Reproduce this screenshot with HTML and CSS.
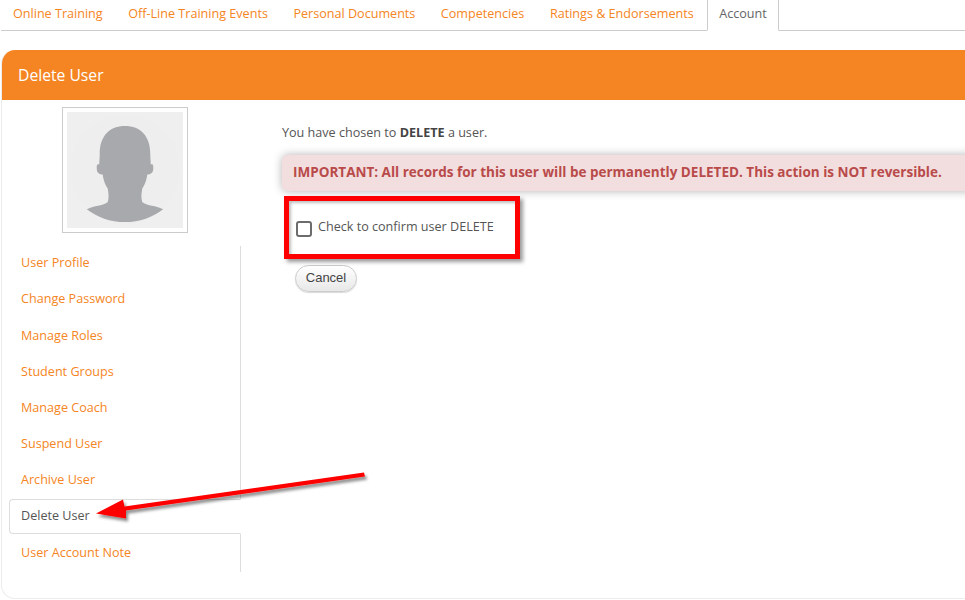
FILE: index.html
```html
<!DOCTYPE html>
<html lang="en">
<head>
<meta charset="utf-8">
<title>Delete User</title>
<link rel="stylesheet" href="styles.css">
</head>
<body>
<nav class="tabs">
  <a class="tab">Online Training</a>
  <a class="tab">Off-Line Training Events</a>
  <a class="tab">Personal Documents</a>
  <a class="tab">Competencies</a>
  <a class="tab">Ratings &amp; Endorsements</a>
  <a class="tab tab-active">Account</a>
</nav>
<section class="panel">
  <header class="panel-head">Delete User</header>
  <div class="panel-body">
    <aside class="side">
      <div class="avatar">
        <svg class="avatar-img" viewBox="0 0 117 117" aria-hidden="true">
          <rect width="117" height="117" fill="#f0efef"/>
          <circle cx="58.5" cy="58" r="55" fill="#eeeeee"/>
          <path fill="#a7a9ac" d="M58.500 14C43 14 33 24 33 42C33 46 32.500 50 32.500 53C30 52 30 54 30 57C30 62 33 63 36 63C37 70 39 74 41 77C42 83 42.500 87 41 91C35 95 28 94 20 98C30 106 44 111 58.500 111C73 111 87 106 97 98C89 94 82 95 76 91C74.500 87 75 83 76 77C78 74 80 70 81 63C84 63 87 62 87 57C87 54 87 52 84.500 53C84.500 50 84 46 84 42C84 24 74 14 58.500 14Z"/>
        </svg>
      </div>
      <ul class="menu">
        <li class="menu-item">User Profile</li>
        <li class="menu-item">Change Password</li>
        <li class="menu-item">Manage Roles</li>
        <li class="menu-item">Student Groups</li>
        <li class="menu-item">Manage Coach</li>
        <li class="menu-item">Suspend User</li>
        <li class="menu-item">Archive User</li>
        <li class="menu-item menu-active">Delete User</li>
        <li class="menu-item">User Account Note</li>
      </ul>
    </aside>
    <main class="content">
      <p class="lead">You have chosen to <b>DELETE</b> a user.</p>
      <div class="alert">IMPORTANT: All records for this user will be permanently DELETED. This action is NOT reversible.</div>
      <label class="confirm"><input class="check" type="checkbox"><span class="confirm-text">Check to confirm user DELETE</span></label>
      <button class="cancel" type="button">Cancel</button>
    </main>
  </div>
</section>
<div class="callout"></div>
<svg class="arrow" width="965" height="600" viewBox="0 0 965 600" aria-hidden="true">
  <defs><filter id="sh" x="-10%" y="-30%" width="120%" height="170%"><feDropShadow dx="2" dy="3" stdDeviation="1.500" flood-color="#000" flood-opacity=".45"/></filter></defs>
  <path filter="url(#sh)" fill="#f00" d="M364 472.500L365 476.500L126 510.500L126 518.500L96 513.500L123 499.500L124.500 506.500Z"/>
</svg>
</body>
</html>
```
FILE: styles.css
```css
* { box-sizing: border-box; }
html, body { margin: 0; padding: 0; }
body {
  width: 965px;
  height: 600px;
  overflow: hidden;
  background: #fff;
  font-family: "Open Sans", "Liberation Sans", sans-serif;
  font-size: 12.6px;
  color: #555;
  position: relative;
}
.tabs {
  display: flex;
  height: 31px;
  border-bottom: 1px solid #ccc;
  margin-left: 1px;
}
.tab {
  padding: 0 12px;
  margin-right: 1.500px;
  line-height: 27px;
  height: 31px;
  color: #f58523;
  white-space: nowrap;
}
.tab-active {
  color: #666;
  background: #fff;
  border: 1px solid #ccc;
  border-top: 0;
  border-bottom: 1px solid #fff;
  padding: 0 11px;
}
.panel {
  margin: 19px 0 0 1px;
  width: 1000px;
  height: 549px;
  border: 1px solid #ececec;
  border-top: 0;
  border-radius: 14px;
  overflow: hidden;
}
.panel-head {
  height: 50px;
  margin-left: -1px;
  padding-left: 17px;
  background: #f58523;
  color: #fff;
  font-size: 15.7px;
  line-height: 50px;
}
.panel-body { display: flex; }
.side { width: 240px; flex: none; }
.avatar {
  width: 126px;
  height: 126px;
  margin: 7px 0 13.300px 60px;
  padding: 4px;
  border: 1px solid #ccc;
  background: #fff;
}
.avatar-img { display: block; width: 116px; height: 116px; }
.menu {
  list-style: none;
  margin: 0 0 0 7px;
  padding: 0;
  width: 232px;
  border-right: 1px solid #ddd;
}
.menu-item {
  height: 36.2px;
  line-height: 33px;
  padding-left: 12px;
  color: #f58523;
}
.menu-active {
  color: #555;
  background: #fff;
  border: 1px solid #ddd;
  border-right-color: #fff;
  border-radius: 4px 0 0 4px;
  height: 35px;
  margin: -1px -1px 2.200px 0;
  padding-left: 11px;
  line-height: 31px;
}
.content { flex: 1; padding: 24px 0 0 40px; min-width: 0; }
.lead { margin: 0 0 14px; line-height: 17px; }
.lead b { color: #444; }
.alert {
  width: 760px;
  height: 36px;
  padding-left: 11px;
  background: #f2dede;
  border-radius: 6px;
  box-shadow: 0 0 10px rgba(0,0,0,.3);
  color: #b94a4a;
  font-weight: 700;
  font-size: 13.500px;
  line-height: 34px;
}
.confirm {
  display: flex;
  align-items: flex-start;
  gap: 6px;
  margin: 28px 0 0 14px;
  height: 18px;
}
.confirm-text { line-height: 17px; margin-top: -1px; }
.check {
  appearance: none;
  width: 16px;
  height: 16px;
  margin: 2px 0 0;
  border: 2px solid #6c6c6c;
  border-radius: 3px;
  background: #fff;
}
.cancel {
  display: block;
  width: 62px;
  height: 27px;
  margin: 28px 0 0 13px;
  padding: 0 0 2px;
  border: 1px solid #ccc;
  border-radius: 14px;
  background: linear-gradient(#fff, #e8e8e8);
  box-shadow: 0 1px 1px rgba(0,0,0,.15);
  color: #444;
  font-family: "Liberation Sans", Arial, sans-serif;
  font-size: 13px;
}
.callout {
  position: absolute;
  left: 284px;
  top: 196px;
  width: 236px;
  height: 63px;
  border: 5px solid #f00;
  box-shadow: 3px 3px 4px rgba(0,0,0,.4), inset 2px 2px 3px rgba(0,0,0,.25);
}
.arrow { position: absolute; left: 0; top: 0; pointer-events: none; }
```
